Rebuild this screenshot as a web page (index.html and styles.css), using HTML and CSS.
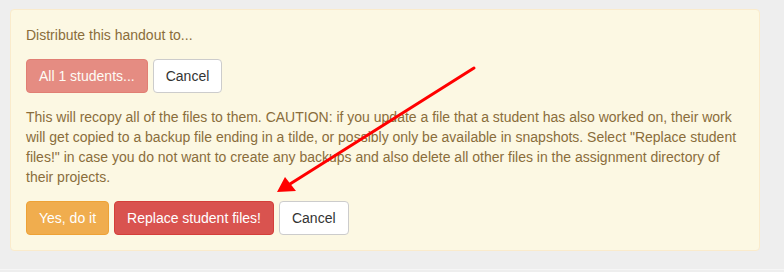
FILE: index.html
```html
<!DOCTYPE html>
<html>
<head>
<meta charset="utf-8">
<link rel="stylesheet" href="styles.css">
</head>
<body>
<div class="page">
  <div class="panel">
    <div class="intro">Distribute this handout to...</div>
    <div class="btn-row">
      <button class="btn btn-danger disabled">All 1 students...</button>
      <button class="btn btn-default">Cancel</button>
    </div>
    <p class="warning-text">This will recopy all of the files to them. CAUTION: if you update a file that a student has also worked on, their work will get copied to a backup file ending in a tilde, or possibly only be available in snapshots. Select "Replace student files!" in case you do not want to create any backups and also delete all other files in the assignment directory of their projects.</p>
    <div class="btn-row">
      <button class="btn btn-warning">Yes, do it</button>
      <button class="btn btn-danger">Replace student files!</button>
      <button class="btn btn-default">Cancel</button>
    </div>
  </div>
  <div class="footer-line"></div>
</div>
<svg class="arrow" width="784" height="272" viewBox="0 0 784 272">
  <line x1="474" y1="68" x2="290" y2="184" stroke="#ff0000" stroke-width="3" stroke-linecap="round"/>
  <polygon points="277,192 285,177 296,191" fill="#ff0000"/>
</svg>
</body>
</html>
```
FILE: styles.css
```css
html, body {
  margin: 0;
  padding: 0;
  background: #eeeeee;
  font-family: "Liberation Sans", Arial, Helvetica, sans-serif;
  font-size: 14px;
  line-height: 20px;
}
.page {
  padding: 9px 0 0 10px;
  height: 263px;
  overflow: hidden;
}
.panel {
  box-sizing: border-box;
  width: 750px;
  height: 242px;
  padding: 15px;
  background: #fcf8e3;
  border: 1px solid #faebcc;
  border-radius: 4px;
  color: #8a6d3b;
}
.intro {
  margin: 0 0 14px 0;
}
.btn-row {
  display: flex;
  gap: 5px;
}
.warning-text {
  margin: 14px 0 14px 0;
}
.btn {
  box-sizing: border-box;
  height: 34px;
  padding: 6px 12px;
  font-family: "Liberation Sans", Arial, Helvetica, sans-serif;
  font-size: 14px;
  line-height: 20px;
  border: 1px solid transparent;
  border-radius: 4px;
  cursor: pointer;
}
.btn-default {
  background: #ffffff;
  border-color: #cccccc;
  color: #333333;
}
.btn-danger {
  background: #d9534f;
  border-color: #d43f3a;
  color: #ffffff;
}
.btn-warning {
  background: #f0ad4e;
  border-color: #eea236;
  color: #ffffff;
}
.disabled {
  opacity: 0.65;
}
.footer-line {
  margin-top: 18px;
  margin-left: -10px;
  border-top: 1px solid #f6f6f6;
}
.arrow {
  position: absolute;
  top: 0;
  left: 0;
}
```
